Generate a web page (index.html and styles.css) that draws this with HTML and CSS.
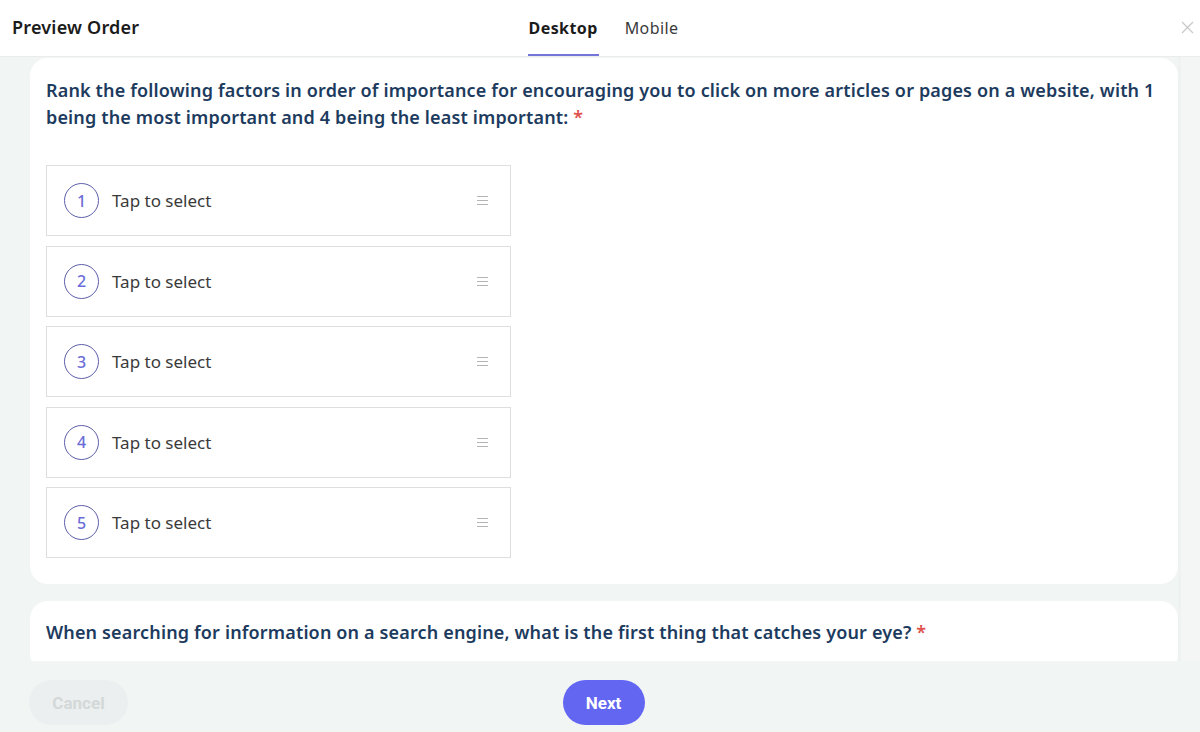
FILE: index.html
```html
<!DOCTYPE html>
<html>
<head>
<meta charset="utf-8">
<link rel="stylesheet" href="styles.css">
</head>
<body>
<div class="modal">
  <header class="header">
    <div class="title">Preview Order</div>
    <nav class="tabs">
      <span class="tab active">Desktop</span>
      <span class="tab">Mobile</span>
    </nav>
    <div class="close">
      <svg width="13" height="13" viewBox="0 0 13 13"><path d="M1 1L12 12M12 1L1 12" stroke="#c9c9c9" stroke-width="1.3" fill="none"/></svg>
    </div>
  </header>
  <main class="content">
    <div class="scroll">
      <section class="card card-first">
        <h2 class="question">Rank the following factors in order of importance for encouraging you to click on more articles or pages on a website, with 1 being the most important and 4 being the least important: <span class="req">*</span></h2>
        <div class="rank-list">
          <div class="rank-item"><span class="num">1</span><span class="label">Tap to select</span><span class="handle"><i></i><i></i><i></i></span></div>
          <div class="rank-item"><span class="num">2</span><span class="label">Tap to select</span><span class="handle"><i></i><i></i><i></i></span></div>
          <div class="rank-item"><span class="num">3</span><span class="label">Tap to select</span><span class="handle"><i></i><i></i><i></i></span></div>
          <div class="rank-item"><span class="num">4</span><span class="label">Tap to select</span><span class="handle"><i></i><i></i><i></i></span></div>
          <div class="rank-item"><span class="num">5</span><span class="label">Tap to select</span><span class="handle"><i></i><i></i><i></i></span></div>
        </div>
      </section>
      <section class="card card-second">
        <h2 class="question">When searching for information on a search engine, what is the first thing that catches your eye? <span class="req">*</span></h2>
      </section>
    </div>
    <div class="scrollbar"></div>
  </main>
  <footer class="footer">
    <div class="foot-left"><button class="btn btn-cancel">Cancel</button></div>
    <button class="btn btn-next">Next</button>
    <div></div>
  </footer>
</div>
</body>
</html>
```

FILE: styles.css
```css
* { box-sizing: border-box; }
html, body { margin: 0; padding: 0; }
body {
  width: 1200px;
  height: 732px;
  overflow: hidden;
  background: #ffffff;
  font-family: "Noto Sans", "Open Sans", sans-serif;
}
.modal {
  display: flex;
  flex-direction: column;
  height: 732px;
}
.header {
  height: 57px;
  flex: none;
  display: grid;
  grid-template-columns: 1fr auto 1fr;
  align-items: center;
  border-bottom: 1px solid #ebeded;
  background: #fff;
}
.title {
  padding-left: 12px;
  font-size: 18px;
  font-weight: 600;
  letter-spacing: 0.2px;
  color: #1b1b1b;
  margin-top: -2px;
}
.tabs {
  display: flex;
  gap: 25px;
  height: 56px;
  align-items: stretch;
  margin-left: 7px;
}
.tab {
  display: flex;
  align-items: center;
  font-size: 16px;
  letter-spacing: 0.4px;
  color: #3a3a3a;
  padding: 2px 1px 0 1px;
  border-bottom: 2px solid transparent;
}
.tab.active {
  font-weight: 700;
  color: #1b1b1b;
  border-bottom-color: #7375d8;
}
.close {
  justify-self: end;
  padding-right: 6px;
  display: flex;
  margin-top: -2px;
}
.content {
  flex: none;
  height: 604px;
  overflow: hidden;
  background: #f1f5f4;
  display: flex;
}
.scroll {
  width: 1178px;
  padding-left: 30px;
  padding-top: 1px;
}
.scrollbar {
  width: 22px;
  background: #f3f6f5;
  border-left: 3px solid #eef2f1;
}
.card {
  background: #fff;
  border-radius: 18px;
  padding: 19px 16px 26px 16px;
}
.card-second {
  margin-top: 17px;
  padding-top: 18px;
}
.question {
  margin: 0;
  font-size: 18px;
  line-height: 27px;
  font-weight: 600;
  color: #1d3b5e;
  letter-spacing: 0.15px;
}
.req { color: #e0524d; }
.rank-list {
  margin-top: 34px;
  display: flex;
  flex-direction: column;
  gap: 9.5px;
  width: 465px;
}
.rank-item {
  height: 71px;
  border: 1px solid #dedede;
  display: flex;
  align-items: center;
  padding-left: 17px;
  padding-right: 22px;
}
.num {
  width: 35px;
  height: 35px;
  border: 1px solid #5b5ea8;
  border-radius: 50%;
  display: flex;
  align-items: center;
  justify-content: center;
  font-size: 16px;
  font-weight: 500;
  color: #6a6dd8;
}
.label {
  margin-left: 13px;
  font-size: 17px;
  color: #3a3a3a;
  flex: 1;
}
.handle {
  width: 11px;
  display: flex;
  flex-direction: column;
  gap: 3px;
}
.handle i {
  display: block;
  height: 1px;
  background: #b5b5b5;
}
.footer {
  flex: 1;
  background: #f1f5f4;
  display: grid;
  grid-template-columns: 1fr auto 1fr;
  align-items: start;
  padding-top: 19px;
}
.foot-left { padding-left: 29px; }
.btn {
  height: 45px;
  border: none;
  border-radius: 23px;
  font-family: "Roboto", "Noto Sans", sans-serif;
  font-size: 17px;
  font-weight: 700;
  padding: 0;
}
.btn-cancel {
  width: 99px;
  background: #ebefef;
  color: #d3d8d8;
}
.btn-next {
  width: 82px;
  background: #6366f1;
  color: #fff;
  margin-left: 7px;
}
```
